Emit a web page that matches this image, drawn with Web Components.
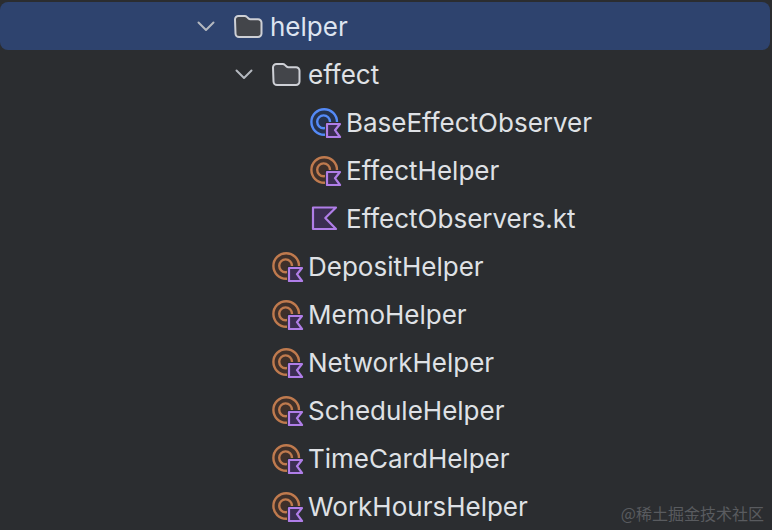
<!DOCTYPE html>
<html><head><meta charset="utf-8"><style>
html,body{margin:0;padding:0;background:#2b2d30;overflow:hidden}
body{width:772px;height:530px;position:relative}
</style></head><body>
<tree-view>
<tree-row depth="0" kind="folder" open selected>helper</tree-row>
<tree-row depth="1" kind="folder" open>effect</tree-row>
<tree-row depth="2" kind="blue">BaseEffectObserver</tree-row>
<tree-row depth="2" kind="orange">EffectHelper</tree-row>
<tree-row depth="2" kind="file">EffectObservers.kt</tree-row>
<tree-row depth="1" kind="orange">DepositHelper</tree-row>
<tree-row depth="1" kind="orange">MemoHelper</tree-row>
<tree-row depth="1" kind="orange">NetworkHelper</tree-row>
<tree-row depth="1" kind="orange">ScheduleHelper</tree-row>
<tree-row depth="1" kind="orange">TimeCardHelper</tree-row>
<tree-row depth="1" kind="orange">WorkHoursHelper</tree-row>
</tree-view>
<water-mark>@稀土掘金技术社区</water-mark>
<script>
const badge=(x,y)=>`<path d="M${x} ${y}h13l-5 6.200 5 6.800h-13z" fill="#3b2e52" stroke="#b07ee8" stroke-width="2.200" stroke-linejoin="round"/>`;
const cls=(c,bg)=>`<circle cx="14.200" cy="16" r="12.800" fill="${bg}" stroke="${c}" stroke-width="2.400"/><circle cx="13.600" cy="15.800" r="6.400" fill="none" stroke="${c}" stroke-width="2.400"/><path d="M15 16h17v16H15z" fill="#2b2d30"/>`+badge(17,18);
const icons={
folder:`<path d="M1 9.500a3.500 3.500 0 0 1 3.500-3.500h6.200c1 0 1.700.4 2.400 1.100l1.200 1.200c.6.6 1.200.9 2.100.9h7.600a3.500 3.500 0 0 1 3.500 3.500v10.800a3.500 3.500 0 0 1-3.500 3.500h-19a3.500 3.500 0 0 1-3.500-3.500z" fill="#43454a" stroke="#ced0d6" stroke-width="2"/>`,
blue:cls('#548af7','#25324d'),
orange:cls('#bf7a4e','#3f302a'),
file:`<path d="M3 5.500h23L15.300 16 26 27H3z" fill="#3b2e52" stroke="#b07ee8" stroke-width="2.200" stroke-linejoin="round"/>`
};
class TreeView extends HTMLElement{constructor(){super();this.attachShadow({mode:'open'}).innerHTML=`<style>:host{display:flex;flex-direction:column;padding-top:2px;width:770px;font-family:Inter,"Noto Sans",sans-serif}</style><slot></slot>`}}
class TreeRow extends HTMLElement{
  constructor(){super();this.attachShadow({mode:'open'})}
  connectedCallback(){
    const d=+this.getAttribute('depth')||0,k=this.getAttribute('kind'),open=this.hasAttribute('open');
    const chev=`<svg width="20" height="20" viewBox="0 0 20 20"><path d="M2.500 6.500l7.500 7.500 7.500-7.500" fill="none" stroke="#b4b8bf" stroke-width="2" stroke-linecap="round" stroke-linejoin="round"/></svg>`;
    this.shadowRoot.innerHTML=`<style>
:host{display:flex;align-items:center;height:48px;border-radius:8px;color:#dfe1e5;font-size:26px;padding-left:${196+d*38}px;box-sizing:border-box}
:host([selected]){background:#2e436e;color:#dde4f0}
.chev{width:38px;flex:none;display:flex}
.spacer{width:38px;flex:none}
svg{display:block;flex:none}
.txt{margin-left:4px;white-space:nowrap;line-height:46px;padding-top:2px}
</style>${open?`<span class="chev">${chev}</span>`:'<span class="spacer"></span>'}<svg width="32" height="32" viewBox="0 0 32 32">${icons[k]}</svg><span class="txt"><slot></slot></span>`;
  }
}
class WaterMark extends HTMLElement{constructor(){super();this.attachShadow({mode:'open'}).innerHTML=`<style>:host{position:absolute;right:8px;bottom:6px;font:16px/22px "Noto Sans CJK SC",sans-serif;color:#595b5f;white-space:nowrap}</style><slot></slot>`}}
customElements.define('tree-view',TreeView);
customElements.define('tree-row',TreeRow);
customElements.define('water-mark',WaterMark);
</script>
</body></html>
